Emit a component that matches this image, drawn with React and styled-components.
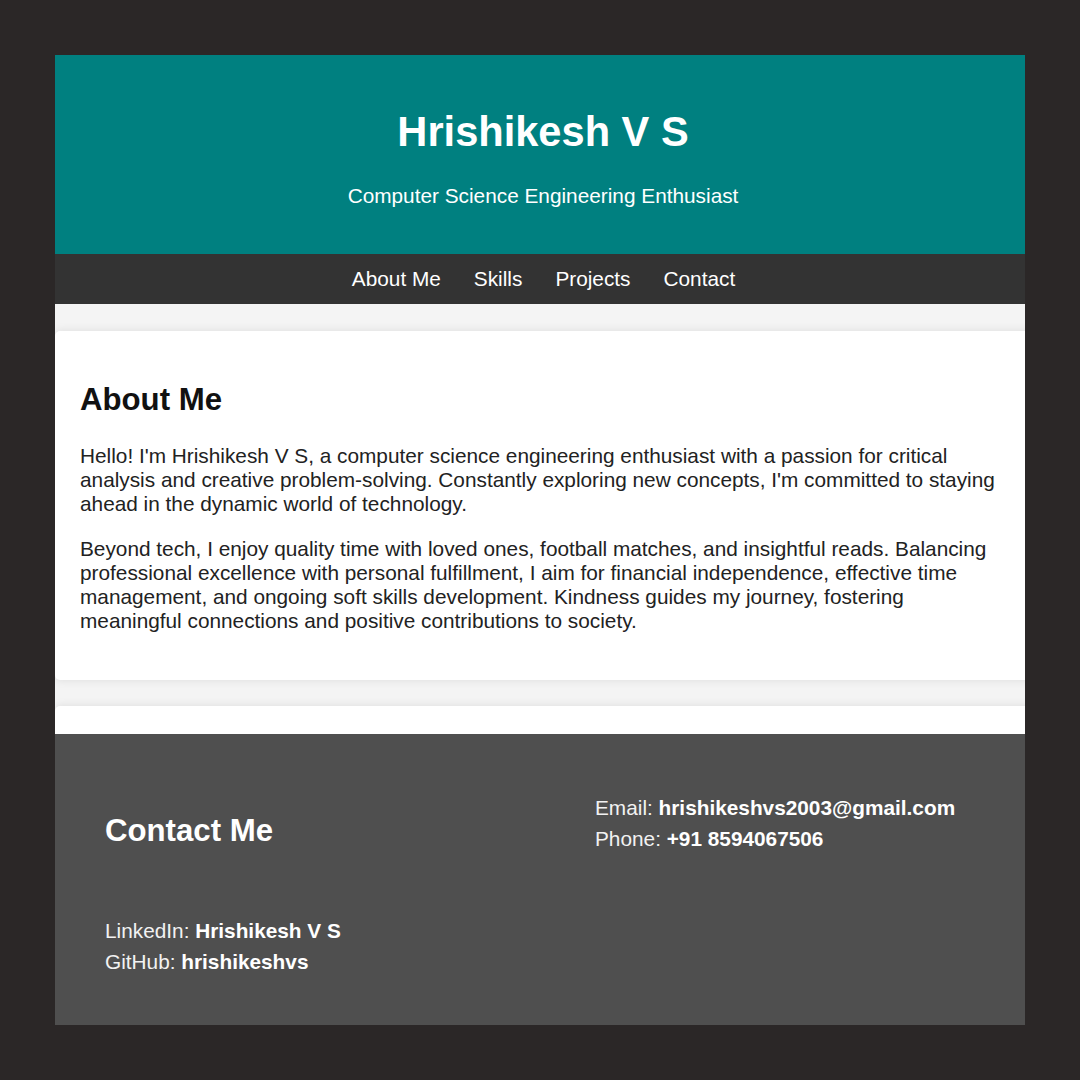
import React from 'react'
import styled, { createGlobalStyle } from 'styled-components'

const GlobalStyle = createGlobalStyle`
  html, body {
    margin: 0;
    padding: 0;
    background: #2b2727;
  }
  body {
    font-family: 'Liberation Sans', Arial, sans-serif;
  }
`

const Frame = styled.div`
  width: 970px;
  height: 970px;
  margin: 55px;
  overflow: hidden;
  background: #f4f4f4;
  display: flex;
  flex-direction: column;
`

const Header = styled.header`
  background: #008080;
  color: #fff;
  height: 199px;
  box-sizing: border-box;
  padding: 53px 0 0 6px;
  text-align: center;
`

const Title = styled.h1`
  margin: 0;
  font-size: 41.6px;
  line-height: 48px;
  font-weight: bold;
`

const Tagline = styled.p`
  margin: 28px 0 0;
  font-size: 20.8px;
  line-height: 24px;
`

const Nav = styled.nav`
  background: #333;
  height: 50px;
  padding-left: 7px;
  display: flex;
  justify-content: center;
  align-items: center;
  gap: 33px;
`

const NavLink = styled.a`
  color: #fff;
  text-decoration: none;
  font-size: 20.8px;
  line-height: 24px;
`

const Main = styled.main`
  padding-top: 27px;
  display: flex;
  flex-direction: column;
  gap: 26px;
`

const Card = styled.section`
  width: 980px;
  box-sizing: border-box;
  background: #fff;
  border-radius: ${(p) => (p.$cut ? '5px 5px 0 0' : '5px')};
  box-shadow: 0 0 10px rgba(0, 0, 0, 0.1);
  padding: ${(p) => (p.$cut ? '0' : '51px 26px 47px 25px')};
  height: ${(p) => (p.$cut ? '28px' : 'auto')};
  color: #222;
`

const SectionTitle = styled.h2`
  margin: 0 0 26px;
  font-size: 31.2px;
  line-height: 36px;
  font-weight: bold;
  color: #111;
`

const Para = styled.p`
  margin: 0 0 21px;
  font-size: 20.8px;
  line-height: 24px;
  &:last-child {
    margin-bottom: 0;
  }
`

const Footer = styled.footer`
  background: #4f4f4f;
  color: #f2f2f2;
  flex: 1;
  padding: 58px 50px 0;
  display: grid;
  grid-template-columns: 490px 1fr;
  grid-template-rows: auto auto;
  row-gap: 61px;
  align-content: start;
`

const FooterHeading = styled.h2`
  margin: 21px 0 0;
  font-size: 31.2px;
  line-height: 36px;
  font-weight: bold;
  color: #fff;
`

const InfoBlock = styled.div`
  font-size: 20.8px;
  line-height: 31px;
  grid-column: ${(p) => p.$col || 'auto'};
`

const InfoLine = styled.div`
  b {
    color: #fff;
  }
`

const App = () => (
  <>
    <GlobalStyle />
    <Frame>
      <Header>
        <Title>Hrishikesh V S</Title>
        <Tagline>Computer Science Engineering Enthusiast</Tagline>
      </Header>
      <Nav>
        <NavLink href='#about'>About Me</NavLink>
        <NavLink href='#skills'>Skills</NavLink>
        <NavLink href='#projects'>Projects</NavLink>
        <NavLink href='#contact'>Contact</NavLink>
      </Nav>
      <Main>
        <Card id='about'>
          <SectionTitle>About Me</SectionTitle>
          <Para>
            Hello! I'm Hrishikesh V S, a computer science engineering enthusiast with a passion for
            critical analysis and creative problem-solving. Constantly exploring new concepts, I'm
            committed to staying ahead in the dynamic world of technology.
          </Para>
          <Para>
            Beyond tech, I enjoy quality time with loved ones, football matches, and insightful
            reads. Balancing professional excellence with personal fulfillment, I aim for financial
            independence, effective time management, and ongoing soft skills development. Kindness
            guides my journey, fostering meaningful connections and positive contributions to
            society.
          </Para>
        </Card>
        <Card id='skills' $cut />
      </Main>
      <Footer id='contact'>
        <FooterHeading>Contact Me</FooterHeading>
        <InfoBlock>
          <InfoLine>
            Email: <b>hrishikeshvs2003@gmail.com</b>
          </InfoLine>
          <InfoLine>
            Phone: <b>+91 8594067506</b>
          </InfoLine>
        </InfoBlock>
        <InfoBlock $col='1'>
          <InfoLine>
            LinkedIn: <b>Hrishikesh V S</b>
          </InfoLine>
          <InfoLine>
            GitHub: <b>hrishikeshvs</b>
          </InfoLine>
        </InfoBlock>
      </Footer>
    </Frame>
  </>
)

export default App
